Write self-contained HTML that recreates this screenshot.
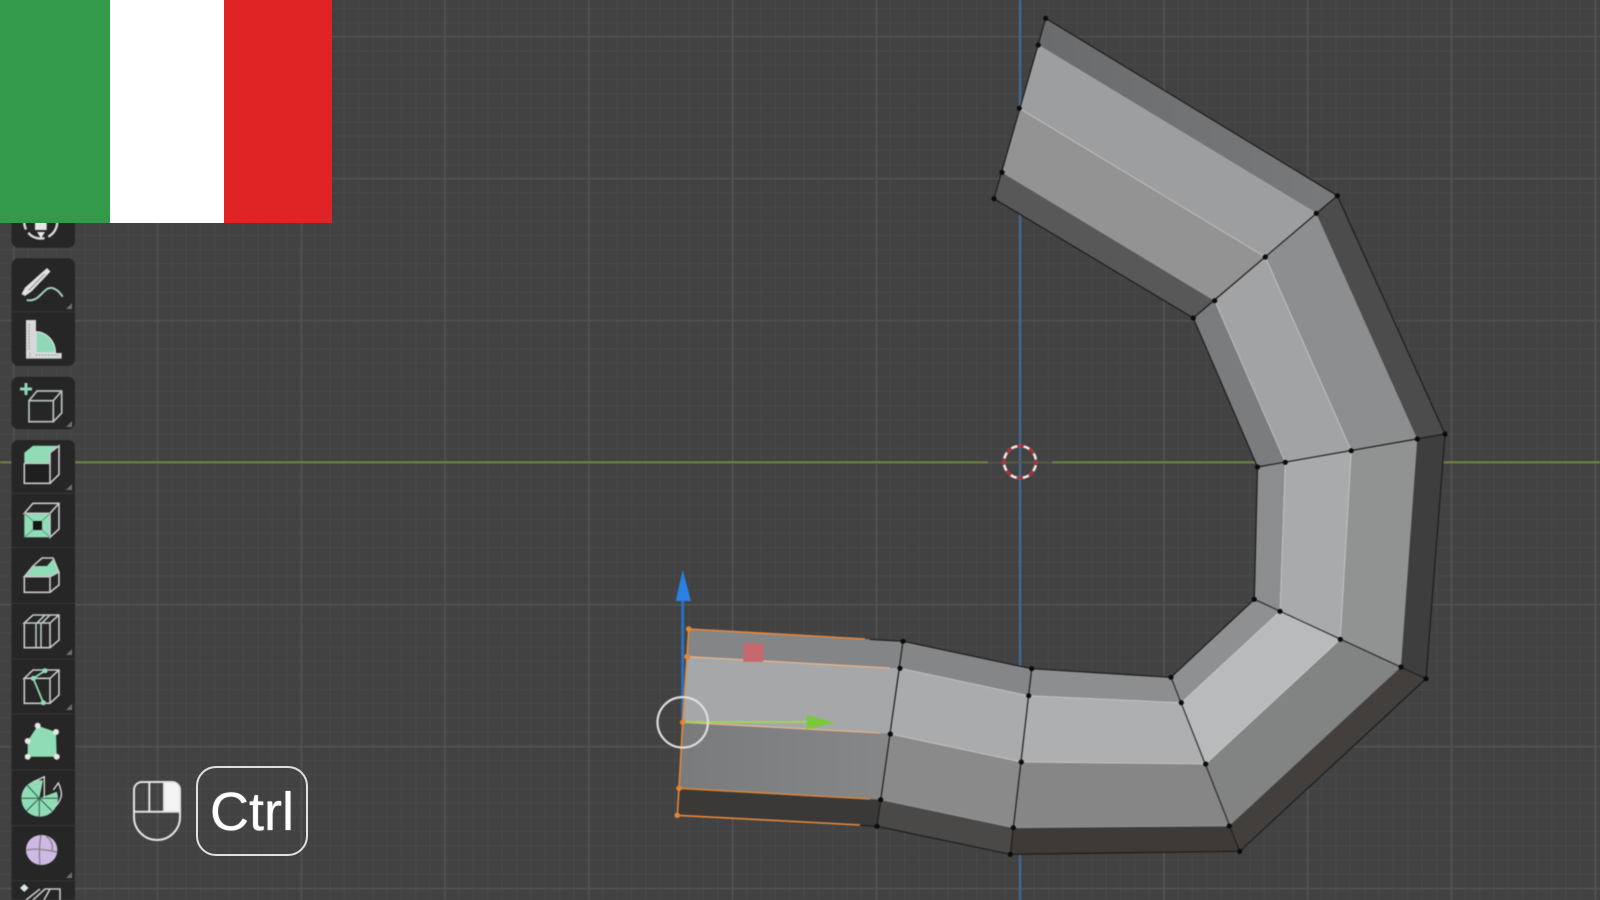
<!DOCTYPE html>
<html>
<head>
<meta charset="utf-8">
<style>
html,body{margin:0;padding:0;background:#424242;}
#stage{position:relative;width:1600px;height:900px;overflow:hidden;background:#424242;}
#grid{position:absolute;left:0;top:0;width:1600px;height:900px;filter:blur(.6px);
background-image:
linear-gradient(to right,#535353 1.5px,transparent 1.5px),
linear-gradient(to bottom,#535353 1.5px,transparent 1.5px),
linear-gradient(to right,#4a4a4a 1px,transparent 1px),
linear-gradient(to bottom,#4a4a4a 1px,transparent 1px);
background-size:143.8px 100%,100% 142px,14.38px 100%,100% 14.2px;
background-position:13px 0,0 36px,13px 0,0 8px;}
svg{position:absolute;left:0;top:0;filter:blur(.4px);}
#flag{position:absolute;left:0;top:0;height:222.5px;width:332px;display:flex;}
#flag div{height:100%;}
#ctrl{position:absolute;left:196px;top:766px;width:108px;height:86px;border:2px solid #e0e0e0;border-radius:20px;box-sizing:content-box;
color:#fff;font-family:"Liberation Sans",sans-serif;font-size:54px;line-height:88px;text-align:center;filter:blur(.3px);text-shadow:0 0 1px #fff;}
</style>
</head>
<body>
<div id="stage">
<div id="grid"></div>

<svg width="1600" height="900" viewBox="0 0 1600 900">
  <defs>
    <linearGradient id="g1" x1="0" y1="0" x2="1" y2="0"><stop offset="0" stop-color="#6a6b6d"/><stop offset="1" stop-color="#797a7c"/></linearGradient>
    <linearGradient id="g2" x1="0" y1="0" x2="1" y2="0"><stop offset="0" stop-color="#7a7b7c"/><stop offset="1" stop-color="#868788"/></linearGradient>
  </defs>
  <!-- axes -->
  <line x1="1020" y1="0" x2="1020" y2="900" stroke="#3f6c9f" stroke-width="2"/>
  <line x1="0" y1="462.3" x2="988" y2="462.3" stroke="#6b8440" stroke-width="2"/>
  <line x1="1052" y1="462.3" x2="1600" y2="462.3" stroke="#6b8440" stroke-width="2"/>
  <line x1="1000" y1="462.3" x2="1050" y2="462.3" stroke="#525c3c" stroke-width="1.5"/>

  <!-- gizmo blue axis -->
  <line x1="682.7" y1="598" x2="682.7" y2="722" stroke="#2a70c4" stroke-width="3"/>
  <polygon points="682.7,570 675.7,601 691,601" fill="#2b80e6"/>

  <g>
    <!-- A-B -->
    <polygon fill="url(#g1)" points="1045.7,18.3 1038.3,45 1316.3,213.3 1337.3,195.7"/>
    <polygon fill="#9d9e9f" points="1038.3,45 1019.3,108.3 1265.3,257 1316.3,213.3"/>
    <polygon fill="#929392" points="1019.3,108.3 1002,172.3 1214.7,300.7 1265.3,257"/>
    <polygon fill="#585858" points="1002,172.3 994,198.7 1193.3,318 1214.7,300.7"/>
    <!-- B-C -->
    <polygon fill="#4c4c4d" points="1337.3,195.7 1316.3,213.3 1417.3,439 1445,434"/>
    <polygon fill="#8d8e8f" points="1316.3,213.3 1265.3,257 1351.3,450.7 1417.3,439"/>
    <polygon fill="#a2a3a4" points="1265.3,257 1214.7,300.7 1285.3,462.3 1351.3,450.7"/>
    <polygon fill="#7b7c7e" points="1214.7,300.7 1193.3,318 1257.5,467 1285.3,462.3"/>
    <!-- C-D -->
    <polygon fill="#3e3e3e" points="1445,434 1417.3,439 1401,667 1426,678.7"/>
    <polygon fill="#919292" points="1417.3,439 1351.3,450.7 1340.3,639.3 1401,667"/>
    <polygon fill="#a9aaab" points="1351.3,450.7 1285.3,462.3 1280,611.3 1340.3,639.3"/>
    <polygon fill="#8c8d8e" points="1285.3,462.3 1257.5,467 1254.3,599.3 1280,611.3"/>
    <!-- D-E -->
    <polygon fill="#433f3d" points="1426,678.7 1401,667 1229.3,826 1239.7,851.3"/>
    <polygon fill="#828383" points="1401,667 1340.3,639.3 1205.7,764 1229.3,826"/>
    <polygon fill="#b9babb" points="1340.3,639.3 1280,611.3 1181.3,702.7 1205.7,764"/>
    <polygon fill="#8f9091" points="1280,611.3 1254.3,599.3 1171,677.3 1181.3,702.7"/>
    <!-- E-F -->
    <polygon fill="#3d3a38" points="1239.7,851.3 1229.3,826 1013.3,827.7 1010.3,854.3"/>
    <polygon fill="#868686" points="1229.3,826 1205.7,764 1021.3,762 1013.3,827.7"/>
    <polygon fill="#aeafb0" points="1205.7,764 1181.3,702.7 1028.7,695.7 1021.3,762"/>
    <polygon fill="#8d8e8f" points="1181.3,702.7 1171,677.3 1031.7,668.7 1028.7,695.7"/>
    <!-- F-G -->
    <polygon fill="#4a4947" points="1010.3,854.3 1013.3,827.7 880.7,799.7 877,826.3"/>
    <polygon fill="#8a8a8a" points="1013.3,827.7 1021.3,762 890.3,734 880.7,799.7"/>
    <polygon fill="#aaabac" points="1021.3,762 1028.7,695.7 900,668.3 890.3,734"/>
    <polygon fill="#858687" points="1028.7,695.7 1031.7,668.7 903,641.3 900,668.3"/>
    <!-- G-H -->
    <polygon fill="#3b3938" points="877,826.3 880.7,799.7 679,788.3 677.3,815.3"/>
    <polygon fill="url(#g2)" points="880.7,799.7 890.3,734 682.7,722.3 679,788.3"/>
    <polygon fill="#a6a7a8" points="890.3,734 900,668.3 687,656.7 682.7,722.3"/>
    <polygon fill="#848586" points="900,668.3 903,641.3 688.7,629 687,656.7"/>
  </g>

  <!-- longitudinal light edges -->
  <g fill="none" stroke="#d8d9da" stroke-width="1" opacity=".65">
    <polyline points="1019.3,108.3 1265.3,257 1351.3,450.7 1340.3,639.3 1205.7,764 1021.3,762 890.3,734"/>
    <polyline points="1214.7,300.7 1285.3,462.3 1280,611.3 1181.3,702.7 1028.7,695.7 900,668.3"/>
    <polyline points="1038.3,45 1316.3,213.3" opacity=".4"/>
    <polyline points="1002,172.3 1214.7,300.7" opacity=".4"/>
    <polyline points="1229.3,826 1013.3,827.7 880.7,799.7" opacity=".5"/>
  </g>

  <!-- dark edges -->
  <g fill="none" stroke="#1d1d1d" stroke-width="1.2">
    <polyline points="860,825.3 877,826.3 1010.3,854.3 1239.7,851.3 1426,678.7 1445,434 1337.3,195.7 1045.7,18.3 994,198.7 1193.3,318 1257.5,467 1254.3,599.3 1171,677.3 1031.7,668.7 903,641.3 870,639.4"/>
    <polyline points="1337.3,195.7 1193.3,318"/>
    <polyline points="1445,434 1257.5,467"/>
    <polyline points="1426,678.7 1254.3,599.3" opacity=".85"/>
    <polyline points="1239.7,851.3 1171,677.3" opacity=".85"/>
    <polyline points="1010.3,854.3 1031.7,668.7"/>
    <polyline points="877,826.3 903,641.3"/>
  </g>

  <!-- selected orange edges -->
  <g fill="none" stroke="#e5883a" stroke-width="1.6">
    <polyline points="677.3,815.3 679,788.3 682.7,722.3 687,656.7 688.7,629"/>
    <polyline points="677.3,815.3 860,825" />
    <polyline points="679,788.3 870,799" opacity=".9"/>
    <polyline points="688.7,629 865,639"/>
  </g>
  <g fill="none" stroke="#e8b48a" stroke-width="1.3">
    <polyline points="682.7,722.3 880,733"/>
    <polyline points="687,656.7 890,668"/>
  </g>

  <!-- black vertices -->
  <g fill="#0c0c0c">
    <circle cx="1045.7" cy="18.3" r="2.6"/><circle cx="1038.3" cy="45" r="2.6"/><circle cx="1019.3" cy="108.3" r="2.6"/><circle cx="1002" cy="172.3" r="2.6"/><circle cx="994" cy="198.7" r="2.6"/>
    <circle cx="1337.3" cy="195.7" r="2.6"/><circle cx="1316.3" cy="213.3" r="2.6"/><circle cx="1265.3" cy="257" r="2.6"/><circle cx="1214.7" cy="300.7" r="2.6"/><circle cx="1193.3" cy="318" r="2.6"/>
    <circle cx="1445" cy="434" r="2.6"/><circle cx="1417.3" cy="439" r="2.6"/><circle cx="1351.3" cy="450.7" r="2.6"/><circle cx="1285.3" cy="462.3" r="2.6"/><circle cx="1257.5" cy="467" r="2.6"/>
    <circle cx="1426" cy="678.7" r="2.6"/><circle cx="1401" cy="667" r="2.6"/><circle cx="1340.3" cy="639.3" r="2.6"/><circle cx="1280" cy="611.3" r="2.6"/><circle cx="1254.3" cy="599.3" r="2.6"/>
    <circle cx="1239.7" cy="851.3" r="2.6"/><circle cx="1229.3" cy="826" r="2.6"/><circle cx="1205.7" cy="764" r="2.6"/><circle cx="1181.3" cy="702.7" r="2.6"/><circle cx="1171" cy="677.3" r="2.6"/>
    <circle cx="1010.3" cy="854.3" r="2.6"/><circle cx="1013.3" cy="827.7" r="2.6"/><circle cx="1021.3" cy="762" r="2.6"/><circle cx="1028.7" cy="695.7" r="2.6"/><circle cx="1031.7" cy="668.7" r="2.6"/>
    <circle cx="877" cy="826.3" r="2.6"/><circle cx="880.7" cy="799.7" r="2.6"/><circle cx="890.3" cy="734" r="2.6"/><circle cx="900" cy="668.3" r="2.6"/><circle cx="903" cy="641.3" r="2.6"/>
  </g>
  <g fill="#e9822f">
    <circle cx="677.3" cy="815.3" r="2.8"/><circle cx="679" cy="788.3" r="2.8"/><circle cx="682.7" cy="722.3" r="2.8"/><circle cx="687" cy="656.7" r="2.8"/><circle cx="688.7" cy="629" r="2.8"/>
  </g>

  <!-- gizmo -->
  <rect x="743.3" y="643.3" width="20" height="18.5" fill="#c7686f"/>
  <line x1="685" y1="722" x2="810" y2="722" stroke="#9ed35a" stroke-width="2"/>
  <polygon points="806.7,715 835,722.7 806.7,729.3" fill="#7cc83c"/>
  <circle cx="682.7" cy="722.3" r="25.2" fill="none" stroke="#dedede" stroke-width="2.2"/>

  <!-- 3D cursor -->
  <circle cx="1020" cy="462" r="16" fill="none" stroke="#f0e8e6" stroke-width="2.6"/>
  <circle cx="1020" cy="462" r="16" fill="none" stroke="#b32a35" stroke-width="2.6" stroke-dasharray="6.3 6.3" stroke-dashoffset="3"/>

  <!-- toolbar -->
  <g fill="#262626">
    <rect x="11.5" y="180" width="63.5" height="67.7" rx="7"/>
    <rect x="11.5" y="258.3" width="63.5" height="107.7" rx="7"/>
    <rect x="11.5" y="376.7" width="63.5" height="52.6" rx="7"/>
    <rect x="11.5" y="440" width="63.5" height="470" rx="7"/>
  </g>
  <g stroke="#363636" stroke-width="1">
    <line x1="11.5" x2="75" y1="311.7" y2="311.7"/>
    <line x1="11.5" x2="75" y1="493.3" y2="493.3"/>
    <line x1="11.5" x2="75" y1="547.5" y2="547.5"/>
    <line x1="11.5" x2="75" y1="603.3" y2="603.3"/>
    <line x1="11.5" x2="75" y1="659" y2="659"/>
    <line x1="11.5" x2="75" y1="714" y2="714"/>
    <line x1="11.5" x2="75" y1="770" y2="770"/>
    <line x1="11.5" x2="75" y1="825.7" y2="825.7"/>
    <line x1="11.5" x2="75" y1="880.7" y2="880.7"/>
  </g>
  <!-- corner triangles -->
  <g fill="#6f6f6f">
    <polygon points="72,303 72,309 66,309"/>
    <polygon points="72,421 72,427 66,427"/>
    <polygon points="72,484 72,490 66,490"/>
    <polygon points="72,649 72,655 66,655"/>
    <polygon points="72,704 72,710 66,710"/>
    <polygon points="72,872 72,878 66,878"/>
  </g>

  <!-- top partial icon -->
  <circle cx="40.7" cy="222" r="16.5" fill="none" stroke="#d8d8d8" stroke-width="2.4" stroke-dasharray="18 4"/>
  <rect x="35" y="220" width="11.7" height="10" fill="#e6e6e6"/>
  <polygon points="37,232 45,232 41,238.5" fill="#e6e6e6"/>

  <!-- pencil -->
  <polygon points="47,268 50.5,271.5 31.5,291.5 25,296 21.5,294 25,287.5" fill="#e2e2e2"/>
  <path d="M44.5 274 L28.5 290.5" stroke="#8a8a8a" stroke-width=".9" fill="none"/>
  <path d="M26.7 300 C31 301 34 300 37 298 C40 296 43 292 47 289 C51 286.5 57 288 62.7 296.7" stroke="#9fd3bb" stroke-width="2" fill="none"/>

  <!-- ruler -->
  <path d="M36 331.7 A19.5 21.5 0 0 1 55.5 353 H36 Z" fill="#90d8b6" stroke="#dfe6e2" stroke-width="1.2"/>
  <path d="M26 320 H36 V353 H61.7 V358.6 H26 Z" fill="#d8d8d8"/>
  <path d="M29 324 V350 M30 353 V357 M36 355 H58" stroke="#888" stroke-width="1" stroke-dasharray="1.5 1.5" fill="none"/>

  <!-- add cube -->
  <path d="M26 383 V395 M20 389 H32" stroke="#8fd8b5" stroke-width="3" fill="none"/>
  <g fill="none" stroke="#b7c2bb" stroke-width="1.7">
    <rect x="29" y="400.7" width="24.3" height="21"/>
    <path d="M29 400.7 L37 391 H61.7 V413 L53.3 421.7 M53.3 400.7 L61.7 391"/>
  </g>

  <!-- extrude -->
  <polygon points="24.3,452.7 33,445.7 59,445.7 50,452.7 50,463.3 24.3,463.3" fill="#8fdcb6"/>
  <rect x="24.3" y="463.3" width="25.7" height="20" fill="#1f1f1f"/>
  <g fill="none" stroke="#c9c9c9" stroke-width="1.6">
    <path d="M24.3 463.3 V483.3 H50 V452.7 M50 452.7 L59 445.7 V474.5 L50 483.3 M24.3 463.3 H50"/>
  </g>

  <!-- inset -->
  <rect x="24.3" y="513.3" width="25.7" height="24" fill="#8fdcb6"/>
  <rect x="33" y="521" width="9" height="9" fill="#151515"/>
  <g fill="none" stroke="#c9c9c9" stroke-width="1.6">
    <path d="M50 513.3 V537.3 L59 529 V503.3 H33 L24.3 513.3 H50 L59 503.3"/>
  </g>
  <path d="M24.3 513.3 L33 521 M50 513.3 L42 521 M24.3 537.3 L33 530 M50 537.3 L42 530" stroke="#5f9f84" stroke-width="1" fill="none"/>

  <!-- bevel -->
  <polygon points="24.3,576 33,566 47,566 54,558 59,572 50,577" fill="#8fdcb6"/>
  <g fill="none" stroke="#c9c9c9" stroke-width="1.6">
    <path d="M24.3 576.7 V592.3 H50 L59 585 V572 L53 558 L42 558 L33 566 L24.3 576.7 H50 L59 572 M50 576.7 V592.3"/>
  </g>

  <!-- loop cut -->
  <g fill="none" stroke="#c9c9c9" stroke-width="1.6">
    <path d="M24.3 623 V647.7 H50 L59 640 V615 H33 L24.3 623 H50 L59 615 M50 623 V647.7"/>
    <path d="M36 623 V647.7 M37 623 L45 615" stroke="#b9c9c0"/>
    <path d="M41 623 V647.7 M42 623 L50 615" stroke="#b9c9c0"/>
  </g>

  <!-- knife -->
  <g fill="none" stroke="#c9c9c9" stroke-width="1.6">
    <path d="M24.3 678.3 V703.3 H50 L59 695 V670 H33 L24.3 678.3 H50 L59 670 M50 678.3 V703.3"/>
  </g>
  <path d="M45 670.7 L33.3 678.3 L43.3 702.7" fill="none" stroke="#8fdcb6" stroke-width="1.8"/>
  <g fill="#8fdcb6"><circle cx="45" cy="670.7" r="2.6"/><circle cx="33.3" cy="678.3" r="2.6"/><circle cx="43.3" cy="702.7" r="2.6"/></g>

  <!-- poly build -->
  <polygon points="37.7,725.7 56,732 56.7,756.7 27.7,756.7 27.7,741" fill="#8fdcb6"/>
  <g fill="#e6e6e6"><circle cx="37.7" cy="725.7" r="3"/><circle cx="56" cy="732" r="3"/><circle cx="56.7" cy="756.7" r="3"/><circle cx="27.7" cy="756.7" r="3"/><circle cx="27.7" cy="741" r="3"/></g>

  <!-- spin -->
  <path d="M39.3 798.3 L43 780.4 A18.3 18.3 0 1 0 56.7 791.7 Z" fill="#8fdcb6"/>
  <path d="M39.3 798.3 H21 M39.3 798.3 L26.5 811 M39.3 798.3 V816.6 M39.3 798.3 L52 811 M39.3 798.3 H57.6 M39.3 798.3 L27 785" stroke="#2f5a48" stroke-width="1" fill="none"/>
  <path d="M33 782 L44.3 776.7 V798 M53.3 790 L58.3 783 C61 788 62 794 61 797 C60 801 58 804 55 806.7" fill="none" stroke="#d5d5d5" stroke-width="1.4"/>

  <!-- smooth -->
  <path d="M41.5 835 C50 835 57.3 841 57.3 850 C57.3 859 50 865 41 865 C33 865 26 858 26 850 C26 841 33 835 41.5 835 Z" fill="#cdb9e2"/>
  <path d="M26.5 850 C36 848 48 850 57 852 M41 835 C39 845 39 855 40 865 M46 836 C52 840 53 846 52 851" stroke="#7f7a88" stroke-width="1.2" fill="none"/>

  <!-- last partial -->
  <polygon points="24.3,884 28.5,888 24.3,892 20,888" fill="#d8e8e0"/>
  <g fill="none" stroke="#c9c9c9" stroke-width="1.6">
    <path d="M26 900 L40 889 M33 900 L45 889 H60 V900 M50 889 L44 900"/>
  </g>

  <!-- mouse icon -->
  <path d="M164 782 H172 A8 8 0 0 1 180 790 V811.7 H164 Z" fill="#f4f4f4"/>
  <path d="M134 811.7 V790 A8 8 0 0 1 142 782 H172 A8 8 0 0 1 180 790 V817 A23 23 0 0 1 134 817 Z M134 811.7 H180 M149.3 782 V811.7 M164 782 V811.7" fill="none" stroke="#e4e4e4" stroke-width="2"/>
</svg>

<div id="ctrl">Ctrl</div>

<div id="flag">
  <div style="width:110px;background:#339a4a"></div>
  <div style="width:114px;background:#ffffff"></div>
  <div style="width:108px;background:#e02426"></div>
</div>
</div>
</body>
</html>
